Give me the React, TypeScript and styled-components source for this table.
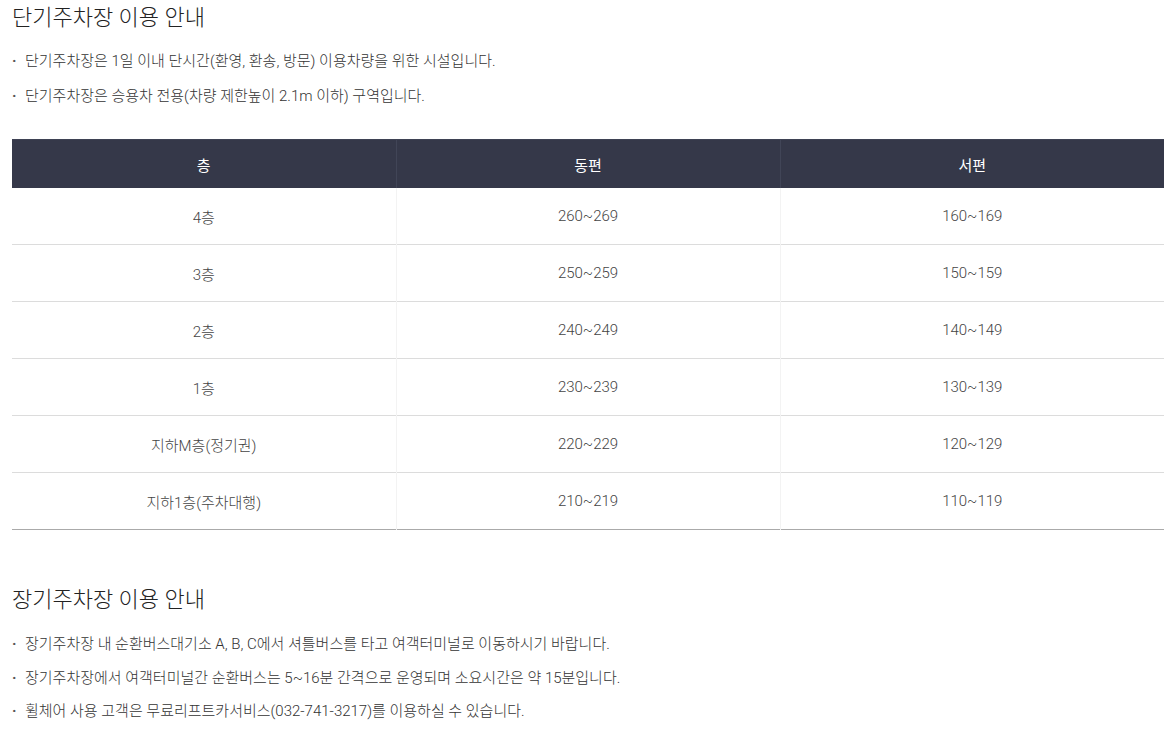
import React from "react";
import styled, { createGlobalStyle } from "styled-components";

const Global = createGlobalStyle`
  html, body { margin: 0; padding: 0; background: #fff; }
  body { font-family: Roboto, "Noto Sans CJK KR", "Noto Sans", sans-serif; }
`;

const Page = styled.div`
  padding: 0 11px 0 12px;
`;

const Section = styled.section<{ $top?: number }>`
  margin-top: ${(p) => p.$top ?? 0}px;
`;

const Title = styled.h2`
  margin: 0;
  font-size: 22px;
  line-height: 36px;
  font-weight: 300;
  color: #222;
`;

const List = styled.ul<{ $top: number; $gap: number }>`
  list-style: none;
  margin: ${(p) => p.$top}px 0 0;
  padding: 0;
  display: flex;
  flex-direction: column;
  gap: ${(p) => p.$gap}px;
`;

const Item = styled.li`
  position: relative;
  padding-left: 13px;
  font-size: 15px;
  line-height: 20px;
  font-weight: 300;
  color: #333;
  &::before {
    content: "·";
    position: absolute;
    left: 0;
    top: 0;
    font-weight: 700;
    color: #555;
  }
`;

const Table = styled.table`
  width: 100%;
  margin-top: 33px;
  border-collapse: collapse;
  table-layout: fixed;
  border-bottom: 1px solid #aaa;
`;

const Th = styled.th`
  height: 48px;
  padding: 0;
  background: #353849;
  color: #fff;
  font-size: 15px;
  font-weight: 400;
  text-align: center;
  border-top: 1px solid #3e4254;
  & + & {
    border-left: 1px solid #414557;
  }
`;

const Td = styled.td`
  height: 56px;
  padding: 0;
  text-align: center;
  font-size: 15px;
  font-weight: 300;
  color: #444;
  & + & {
    border-left: 1px solid #f3f3f3;
  }
`;

const Tr = styled.tr`
  & + & td {
    border-top: 1px solid #dcdcdc;
  }
`;

const rows: [string, string, string][] = [
  ["4층", "260~269", "160~169"],
  ["3층", "250~259", "150~159"],
  ["2층", "240~249", "140~149"],
  ["1층", "230~239", "130~139"],
  ["지하M층(정기권)", "220~229", "120~129"],
  ["지하1층(주차대행)", "210~219", "110~119"],
];

export default function App() {
  return (
    <Page>
      <Global />
      <Section>
        <Title>단기주차장 이용 안내</Title>
        <List $top={15} $gap={15}>
          <Item>단기주차장은 1일 이내 단시간(환영, 환송, 방문) 이용차량을 위한 시설입니다.</Item>
          <Item>단기주차장은 승용차 전용(차량 제한높이 2.1m 이하) 구역입니다.</Item>
        </List>
        <Table>
          <thead>
            <tr>
              <Th>층</Th>
              <Th>동편</Th>
              <Th>서편</Th>
            </tr>
          </thead>
          <tbody>
            {rows.map((r) => (
              <Tr key={r[0]}>
                <Td>{r[0]}</Td>
                <Td>{r[1]}</Td>
                <Td>{r[2]}</Td>
              </Tr>
            ))}
          </tbody>
        </Table>
      </Section>
      <Section $top={52}>
        <Title>장기주차장 이용 안내</Title>
        <List $top={16} $gap={13.5}>
          <Item>장기주차장 내 순환버스대기소 A, B, C에서 셔틀버스를 타고 여객터미널로 이동하시기 바랍니다.</Item>
          <Item>장기주차장에서 여객터미널간 순환버스는 5~16분 간격으로 운영되며 소요시간은 약 15분입니다.</Item>
          <Item>휠체어 사용 고객은 무료리프트카서비스(032-741-3217)를 이용하실 수 있습니다.</Item>
        </List>
      </Section>
    </Page>
  );
}
